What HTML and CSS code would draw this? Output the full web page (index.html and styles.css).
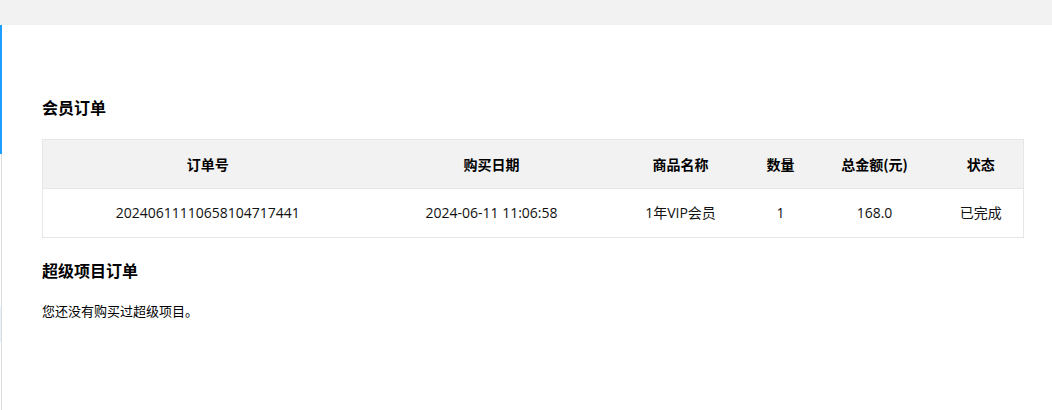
FILE: index.html
```html
<!DOCTYPE html>
<html lang="zh-CN">
<head>
<meta charset="utf-8">
<title>订单</title>
<link rel="stylesheet" href="styles.css">
</head>
<body>
<div class="topbar"></div>
<div class="layout">
  <div class="rail">
    <div class="rail-active"></div>
    <div class="rail-rest">
      <div class="rail-gap"></div>
      <div class="rail-hover"></div>
    </div>
  </div>
  <div class="content">
    <h3 class="title">会员订单</h3>
    <table class="table">
      <colgroup>
        <col class="c1"><col class="c2"><col class="c3"><col class="c4"><col class="c5"><col class="c6">
      </colgroup>
      <thead>
        <tr><th>订单号</th><th>购买日期</th><th>商品名称</th><th>数量</th><th>总金额(元)</th><th>状态</th></tr>
      </thead>
      <tbody>
        <tr><td>20240611110658104717441</td><td>2024-06-11 11:06:58</td><td>1年VIP会员</td><td>1</td><td>168.0</td><td>已完成</td></tr>
      </tbody>
    </table>
    <h3 class="title title-second">超级项目订单</h3>
    <p class="empty">您还没有购买过超级项目。</p>
  </div>
</div>
</body>
</html>
```
FILE: styles.css
```css
html, body {
  margin: 0;
  padding: 0;
  background: #fff;
}
body {
  font-family: "Open Sans", "Noto Sans CJK SC", sans-serif;
  color: #333;
  height: 410px;
  overflow: hidden;
}
.topbar {
  height: 25px;
  background: #f2f2f2;
}
.layout {
  display: flex;
  height: 385px;
}
.rail {
  width: 2px;
  display: flex;
  flex-direction: column;
}
.rail-active {
  height: 129px;
  background: #1e9fff;
}
.rail-rest {
  flex: 1;
  display: flex;
  flex-direction: column;
  border-right: 1px solid #dcdcdc;
  width: 1px;
}
.rail-gap {
  height: 153px;
}
.rail-hover {
  height: 35px;
  background: #e6f3fd;
}
.content {
  flex: 1;
  padding: 70px 28px 0 40px;
}
.title {
  margin: 0;
  font-size: 16px;
  line-height: 24px;
  font-weight: bold;
  color: #000;
  font-family: "Noto Sans CJK SC", sans-serif;
}
.table {
  margin-top: 20px;
  width: 981px;
  border-collapse: collapse;
  table-layout: fixed;
  border: 1px solid #e6e6e6;
}
.c1 { width: 330px; }
.c2 { width: 238px; }
.c3 { width: 140px; }
.c4 { width: 60px; }
.c5 { width: 128px; }
.c6 { width: 85px; }
.table th, .table td {
  height: 48px;
  padding: 0;
  text-align: center;
  border-top: 1px solid #e6e6e6;
  font-size: 14px;
  line-height: 20px;
}
.table th {
  background: #f2f2f2;
  font-weight: bold;
  color: #000;
  font-family: "Noto Sans CJK SC", sans-serif;
  font-size: 14px;
}
.table td {
  color: #111;
}
.title-second {
  margin-top: 20px;
}
.empty {
  margin: 19px 0 0;
  font-size: 13px;
  line-height: 20px;
  color: #000;
  font-family: "Noto Sans CJK SC", sans-serif;
}
```
